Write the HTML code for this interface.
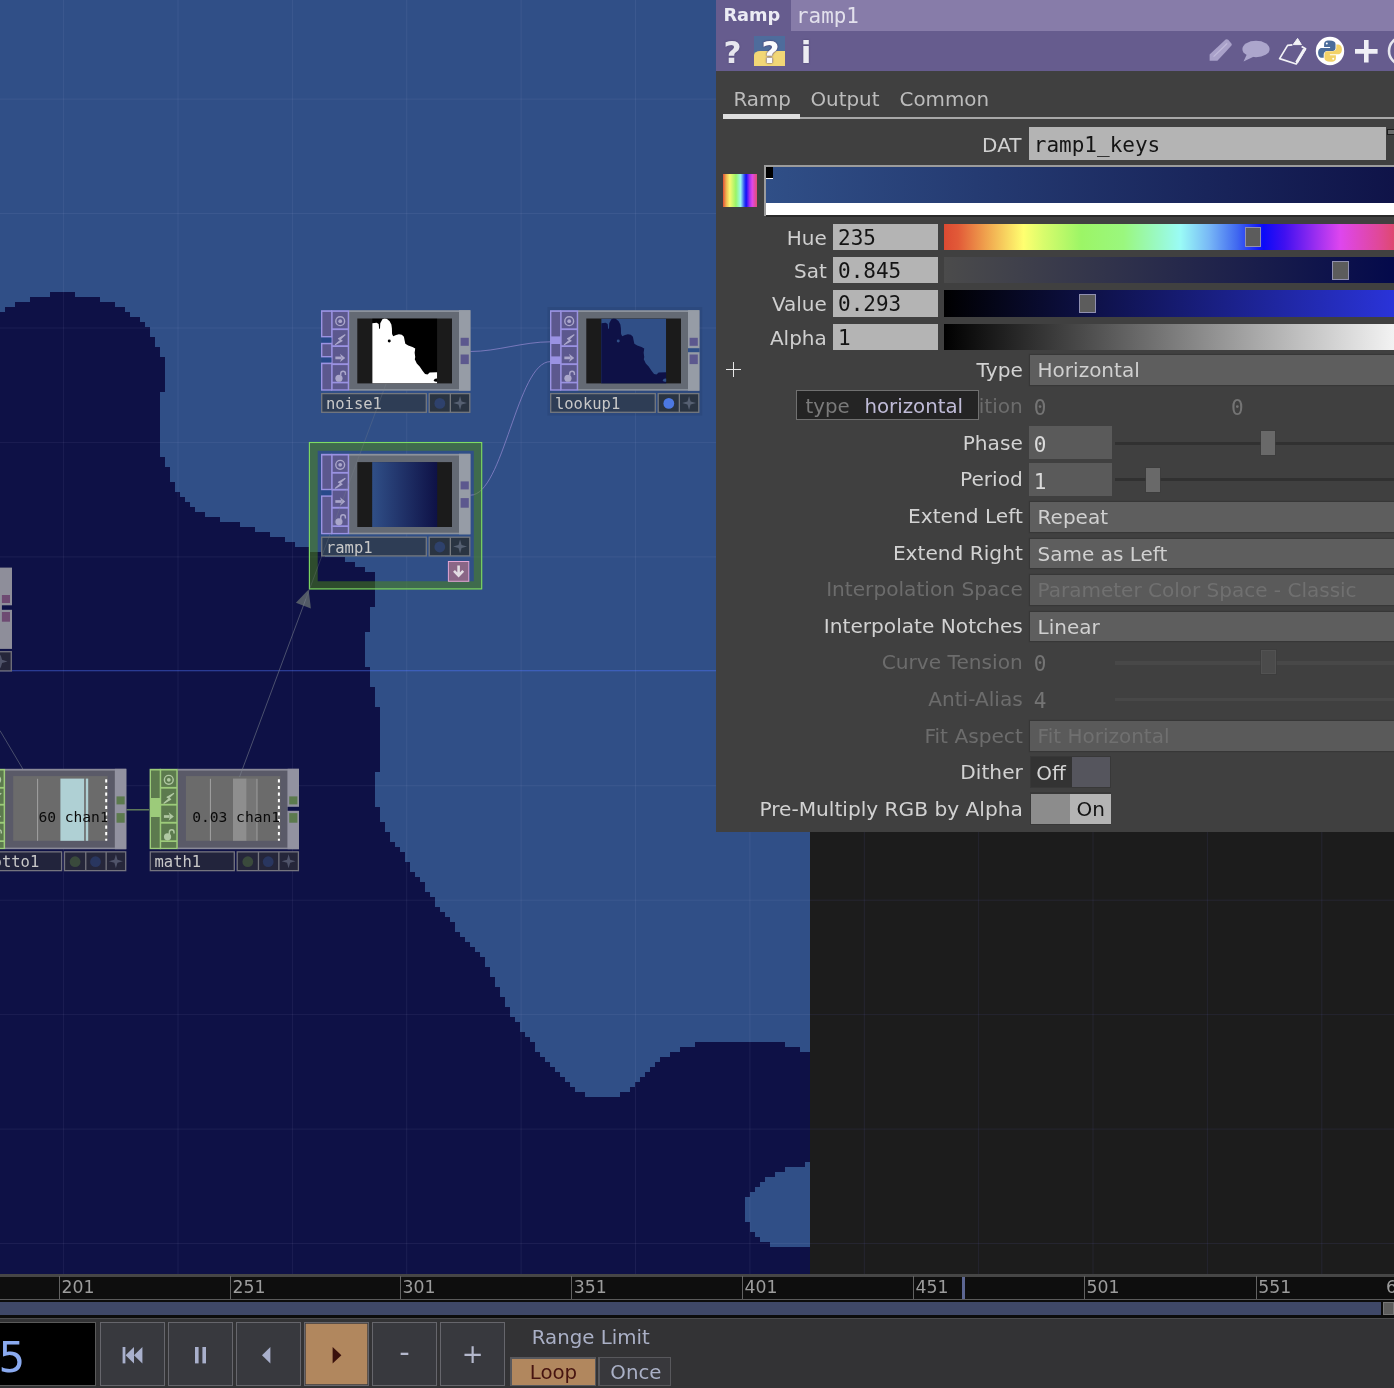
<!DOCTYPE html>
<html><head><meta charset="utf-8"><title>TouchDesigner - ramp1</title>
<style>
html,body{margin:0;padding:0;background:#0e1146;}
body{width:1394px;height:1388px;position:relative;overflow:hidden;font-family:"DejaVu Sans","Liberation Sans",sans-serif;}
.abs{position:absolute;}
#pp,#tl,#net{will-change:transform;}
.mono{font-family:"DejaVu Sans Mono","Liberation Mono",monospace;}

#pp{left:716px;top:0;width:678px;height:831.9px;background:#404040;overflow:hidden;}
#pp .h1{left:0;top:0;width:678px;height:31px;background:#877ca9;}
#pp .h1 .op{left:0;top:0;width:75px;height:31px;background:#665c8e;color:#ececf4;font-weight:bold;font-size:17.8px;line-height:30px;text-indent:7.4px;}
#pp .h1 .nm{left:80px;top:0;height:31px;line-height:32px;color:#e2e0ec;font-size:20.9px;}
#pp .h2{left:0;top:31px;width:678px;height:40px;background:#665c8e;}
.tab{top:86.5px;height:26px;line-height:26px;font-size:19.9px;color:#bcbcbc;}
.lbl{right:371.2px;height:31px;line-height:31px;font-size:20.15px;color:#d2d2d2;white-space:nowrap;text-align:right;}
.lbl.dis{color:#6c6c6c;}
.dd{left:314.2px;width:372px;height:29.7px;background:#5e5e5e;box-shadow:0 0 0 1.1px #373737;color:#d0d0d0;font-size:20px;line-height:31.4px;text-indent:7.4px;white-space:nowrap;}
.dd.dis{color:#707070;background:#5a5a5a;}
.nf{left:313.2px;width:82.7px;height:33.3px;background:#5a5a5a;color:#dadada;font-size:21px;line-height:34.6px;text-indent:4.5px;}
.trk{left:399px;width:290px;height:3.2px;background:#313131;}
.knob{width:14.4px;height:23.6px;background:#696969;box-shadow:0 0 0 0.7px #3c3c3c;}
.hl{right:567.2px;height:26.4px;line-height:29px;font-size:20px;color:#cfcfcf;text-align:right;white-space:nowrap;}
.hf{left:117px;width:104.6px;height:26.4px;background:#b4b4b4;color:#141414;font-size:21px;line-height:29.8px;text-indent:5px;}
.hs{left:228px;width:472.7px;height:26.4px;}
.hk{width:14.6px;height:17.6px;background:#5c5c5c;border:1px solid #9090b0;}

#tl{left:0;top:1274.2px;width:1394px;height:113.8px;background:#333335;}
.tk{top:1.4px;width:1.4px;height:22.6px;background:#626262;}
.tn{top:1.2px;height:22px;line-height:22px;font-size:17.3px;color:#9c9c9c;}
.btn{top:47px;width:63.3px;height:62.6px;background:#38393e;border:1.1px solid #66666c;}

</style></head><body>
<svg id="net" width="1394" height="1275" viewBox="0 0 1394 1275" style="position:absolute;left:0;top:0"><rect width="810" height="1275" fill="#0e1146"/><g fill="#304f87" shape-rendering="crispEdges"><rect x="0.00" y="306.90" width="4.55" height="5.05"/><rect x="0.00" y="301.90" width="14.55" height="5.05"/><rect x="0.00" y="296.90" width="29.55" height="5.05"/><rect x="0.00" y="291.90" width="49.55" height="5.05"/><rect x="0.00" y="0.00" width="810.05" height="291.95"/><rect x="74.50" y="291.90" width="735.55" height="5.05"/><rect x="99.50" y="296.90" width="710.55" height="5.05"/><rect x="114.50" y="301.90" width="695.55" height="5.05"/><rect x="124.50" y="306.90" width="685.55" height="5.05"/><rect x="129.50" y="311.90" width="680.55" height="5.05"/><rect x="139.50" y="316.90" width="670.55" height="5.05"/><rect x="144.50" y="321.90" width="665.55" height="5.05"/><rect x="149.50" y="326.90" width="660.55" height="10.05"/><rect x="154.50" y="336.90" width="655.55" height="10.05"/><rect x="159.50" y="346.90" width="650.55" height="10.05"/><rect x="159.50" y="391.90" width="650.55" height="65.05"/><rect x="164.50" y="356.90" width="645.55" height="35.05"/><rect x="164.50" y="456.90" width="645.55" height="10.05"/><rect x="169.50" y="466.90" width="640.55" height="15.05"/><rect x="174.50" y="481.90" width="635.55" height="10.05"/><rect x="179.50" y="491.90" width="630.55" height="5.05"/><rect x="184.50" y="496.90" width="625.55" height="5.05"/><rect x="189.50" y="501.90" width="620.55" height="5.05"/><rect x="194.50" y="506.90" width="615.55" height="5.05"/><rect x="204.50" y="511.90" width="605.55" height="5.05"/><rect x="219.50" y="516.90" width="590.55" height="5.05"/><rect x="239.50" y="521.90" width="570.55" height="5.05"/><rect x="254.50" y="526.90" width="555.55" height="5.05"/><rect x="269.50" y="531.90" width="540.55" height="5.05"/><rect x="284.50" y="536.90" width="525.55" height="5.05"/><rect x="294.50" y="541.90" width="515.55" height="5.05"/><rect x="309.50" y="546.90" width="500.55" height="5.05"/><rect x="324.50" y="551.90" width="485.55" height="5.05"/><rect x="344.50" y="556.90" width="465.55" height="5.05"/><rect x="354.50" y="561.90" width="455.55" height="5.05"/><rect x="364.50" y="566.90" width="445.55" height="5.05"/><rect x="364.50" y="631.90" width="445.55" height="35.05"/><rect x="369.50" y="606.90" width="440.55" height="25.05"/><rect x="369.50" y="666.90" width="440.55" height="20.05"/><rect x="374.50" y="571.90" width="435.55" height="35.05"/><rect x="374.50" y="686.90" width="435.55" height="20.05"/><rect x="374.50" y="771.90" width="435.55" height="35.05"/><rect x="379.50" y="706.90" width="430.55" height="65.05"/><rect x="379.50" y="806.90" width="430.55" height="15.05"/><rect x="384.50" y="821.90" width="425.55" height="10.05"/><rect x="389.50" y="831.90" width="420.55" height="10.05"/><rect x="394.50" y="841.90" width="415.55" height="5.05"/><rect x="399.50" y="846.90" width="410.55" height="5.05"/><rect x="404.50" y="851.90" width="405.55" height="10.05"/><rect x="409.50" y="861.90" width="400.55" height="10.05"/><rect x="414.50" y="871.90" width="395.55" height="5.05"/><rect x="419.50" y="876.90" width="390.55" height="5.05"/><rect x="424.50" y="881.90" width="385.55" height="10.05"/><rect x="429.50" y="891.90" width="380.55" height="5.05"/><rect x="434.50" y="896.90" width="375.55" height="10.05"/><rect x="439.50" y="906.90" width="370.55" height="5.05"/><rect x="444.50" y="911.90" width="365.55" height="5.05"/><rect x="449.50" y="916.90" width="360.55" height="5.05"/><rect x="454.50" y="921.90" width="355.55" height="10.05"/><rect x="459.50" y="931.90" width="350.55" height="5.05"/><rect x="464.50" y="936.90" width="345.55" height="5.05"/><rect x="469.50" y="941.90" width="340.55" height="5.05"/><rect x="474.50" y="946.90" width="335.55" height="5.05"/><rect x="479.50" y="951.90" width="330.55" height="5.05"/><rect x="484.50" y="956.90" width="325.55" height="10.05"/><rect x="489.50" y="966.90" width="320.55" height="10.05"/><rect x="494.50" y="976.90" width="315.55" height="10.05"/><rect x="499.50" y="986.90" width="310.55" height="10.05"/><rect x="504.50" y="996.90" width="305.55" height="10.05"/><rect x="509.50" y="1006.90" width="300.55" height="10.05"/><rect x="514.50" y="1016.90" width="295.55" height="5.05"/><rect x="519.50" y="1021.90" width="290.55" height="10.05"/><rect x="524.50" y="1031.90" width="285.55" height="5.05"/><rect x="529.50" y="1036.90" width="280.55" height="5.05"/><rect x="534.50" y="1046.90" width="145.05" height="5.05"/><rect x="534.50" y="1041.90" width="160.05" height="5.05"/><rect x="539.50" y="1051.90" width="130.05" height="5.05"/><rect x="544.50" y="1056.90" width="115.05" height="5.05"/><rect x="549.50" y="1061.90" width="105.05" height="5.05"/><rect x="554.50" y="1066.90" width="95.05" height="5.05"/><rect x="559.50" y="1071.90" width="85.05" height="5.05"/><rect x="564.50" y="1076.90" width="75.05" height="5.05"/><rect x="569.50" y="1081.90" width="65.05" height="5.05"/><rect x="574.50" y="1086.90" width="55.05" height="5.05"/><rect x="584.50" y="1091.90" width="35.05" height="5.05"/><rect x="744.50" y="1196.90" width="65.55" height="25.05"/><rect x="749.50" y="1191.90" width="60.55" height="5.05"/><rect x="749.50" y="1221.90" width="60.55" height="10.05"/><rect x="754.50" y="1186.90" width="55.55" height="5.05"/><rect x="754.50" y="1231.90" width="55.55" height="5.05"/><rect x="759.50" y="1181.90" width="50.55" height="5.05"/><rect x="759.50" y="1236.90" width="50.55" height="5.05"/><rect x="764.50" y="1176.90" width="45.55" height="5.05"/><rect x="769.50" y="1241.90" width="40.55" height="5.05"/><rect x="774.50" y="1171.90" width="35.55" height="5.05"/><rect x="784.50" y="1041.90" width="25.55" height="5.05"/><rect x="784.50" y="1166.90" width="25.55" height="5.05"/><rect x="799.50" y="1046.90" width="10.55" height="5.05"/><rect x="804.50" y="1161.90" width="5.55" height="5.05"/></g><rect x="810" y="0" width="584" height="1275" fill="#1c1c1c"/><rect x="63.1" y="0" width="1" height="1275" fill="#d0d8ff" fill-opacity="0.072"/><rect x="177.5" y="0" width="1" height="1275" fill="#d0d8ff" fill-opacity="0.072"/><rect x="291.9" y="0" width="1" height="1275" fill="#d0d8ff" fill-opacity="0.072"/><rect x="406.2" y="0" width="1" height="1275" fill="#d0d8ff" fill-opacity="0.072"/><rect x="520.6" y="0" width="1" height="1275" fill="#d0d8ff" fill-opacity="0.072"/><rect x="635.0" y="0" width="1" height="1275" fill="#d0d8ff" fill-opacity="0.072"/><rect x="749.4" y="0" width="1" height="1275" fill="#d0d8ff" fill-opacity="0.072"/><rect x="863.8" y="0" width="1" height="1275" fill="#8080ff" fill-opacity="0.09"/><rect x="978.1" y="0" width="1" height="1275" fill="#8080ff" fill-opacity="0.09"/><rect x="1092.5" y="0" width="1" height="1275" fill="#8080ff" fill-opacity="0.09"/><rect x="1206.9" y="0" width="1" height="1275" fill="#8080ff" fill-opacity="0.09"/><rect x="1321.3" y="0" width="1" height="1275" fill="#8080ff" fill-opacity="0.09"/><rect x="0" y="98.6" width="810" height="1" fill="#d0d8ff" fill-opacity="0.072"/><rect x="810" y="98.6" width="584" height="1" fill="#8080ff" fill-opacity="0.09"/><rect x="0" y="213.0" width="810" height="1" fill="#d0d8ff" fill-opacity="0.072"/><rect x="810" y="213.0" width="584" height="1" fill="#8080ff" fill-opacity="0.09"/><rect x="0" y="327.5" width="810" height="1" fill="#d0d8ff" fill-opacity="0.072"/><rect x="810" y="327.5" width="584" height="1" fill="#8080ff" fill-opacity="0.09"/><rect x="0" y="441.9" width="810" height="1" fill="#d0d8ff" fill-opacity="0.072"/><rect x="810" y="441.9" width="584" height="1" fill="#8080ff" fill-opacity="0.09"/><rect x="0" y="556.4" width="810" height="1" fill="#d0d8ff" fill-opacity="0.072"/><rect x="810" y="556.4" width="584" height="1" fill="#8080ff" fill-opacity="0.09"/><rect x="0" y="670.0" width="810" height="1.3" fill="#5078ff" fill-opacity="0.42"/><rect x="810" y="670.8" width="584" height="1" fill="#8080ff" fill-opacity="0.09"/><rect x="0" y="785.2" width="810" height="1" fill="#d0d8ff" fill-opacity="0.072"/><rect x="810" y="785.2" width="584" height="1" fill="#8080ff" fill-opacity="0.09"/><rect x="0" y="899.7" width="810" height="1" fill="#d0d8ff" fill-opacity="0.072"/><rect x="810" y="899.7" width="584" height="1" fill="#8080ff" fill-opacity="0.09"/><rect x="0" y="1014.1" width="810" height="1" fill="#d0d8ff" fill-opacity="0.072"/><rect x="810" y="1014.1" width="584" height="1" fill="#8080ff" fill-opacity="0.09"/><rect x="0" y="1128.6" width="810" height="1" fill="#d0d8ff" fill-opacity="0.072"/><rect x="810" y="1128.6" width="584" height="1" fill="#8080ff" fill-opacity="0.09"/><rect x="0" y="1243.0" width="810" height="1" fill="#d0d8ff" fill-opacity="0.072"/><rect x="810" y="1243.0" width="584" height="1" fill="#8080ff" fill-opacity="0.09"/><line x1="0" y1="730.6" x2="27" y2="776" stroke="#7a828c" stroke-opacity="0.6" stroke-width="0.9"/><rect x="547.4" y="307" width="154.8" height="108.6" fill="#101830" fill-opacity="0.09"/><path d="M470.4 351.5 C497 351.5 523 341.8 550.4 341.8" fill="none" stroke="#8f86cc" stroke-width="1" stroke-opacity="0.75"/><path d="M470.4 495.2 C503.4 495.2 517.1 361.6 550.4 361.6" fill="none" stroke="#8f86cc" stroke-width="1" stroke-opacity="0.75"/><line x1="126.5" y1="809.8" x2="149" y2="809.8" stroke="#6e8e5e" stroke-width="1.3"/><path fill-rule="evenodd" d="M308.9 442 H482.2 V589.4 H308.9 Z M317.7 450.7 H473.8 V581.2 H317.7 Z" fill="#4e8714" fill-opacity="0.5"/><rect x="309.4" y="442.5" width="172.3" height="146.4" fill="none" stroke="#7edc64" stroke-width="1.1"/><polygon points="308.6,589.6 295.9,602.7 310.9,608.6" fill="#525a66"/><rect x="448.4" y="561.5" width="20.4" height="19.8" fill="#8a6686" stroke="#e4a6d4" stroke-width="1"/><path d="M458.6 565.5 V575 M454 570.8 L458.6 575.6 L463.2 570.8" fill="none" stroke="#e2dce2" stroke-width="2.6"/><g transform="translate(321.0,310.2)"><rect x="28" y="0" width="121.4" height="80.5" fill="#8c929c"/><rect x="28" y="1.8" width="110" height="77.1" fill="#646a74"/><rect x="138" y="0" width="11.4" height="80.5" fill="#969ca6"/><rect x="10.2" y="0" width="18" height="80.5" fill="#9a92e2"/><rect x="11.6" y="1.7" width="15.1" height="16.4" fill="#5c588e"/><rect x="11.6" y="19.9" width="15.1" height="15.1" fill="#5c588e"/><rect x="11.6" y="36.8" width="15.1" height="16.2" fill="#5c588e"/><rect x="11.6" y="54.9" width="15.1" height="16.6" fill="#5c588e"/><rect x="11.6" y="73.2" width="15.1" height="5.9" fill="#5c588e"/><g transform="translate(12.00,3.80) scale(0.9)"><circle cx="8" cy="8" r="4.9" fill="none" stroke="#aaa6ca" stroke-width="1.55"/><circle cx="8" cy="8" r="2.1" fill="#aaa6ca"/></g><g transform="translate(12.00,22.25) scale(0.9)"><path transform="translate(8,8) scale(0.86) translate(-8,-8)" d="M14.2 1.8 L5.8 6.8 L8.8 8.4 L1.8 14.4 L10.4 9.4 L7.6 7.8 Z" fill="#aaa6ca" stroke="#aaa6ca" stroke-width="1.5" stroke-linejoin="round"/></g><g transform="translate(12.00,40.50) scale(0.9)"><path d="M2.6 8 H9" fill="none" stroke="#aaa6ca" stroke-width="3"/><path d="M7.8 3.4 L13.6 8 L7.8 12.6 L9.4 8 Z" fill="#aaa6ca"/></g><g transform="translate(12.00,58.50) scale(0.9)"><circle cx="6.6" cy="10.6" r="4" fill="#aaa6ca"/><path d="M8.6 7.6 V5.4 a2.6 2.6 0 0 1 5.2 0 V7" fill="none" stroke="#aaa6ca" stroke-width="1.6"/></g><rect x="0.6" y="27.2" width="9.8" height="5.4" fill="#28498a"/><rect x="0.6" y="47.2" width="9.8" height="5.2" fill="#28498a"/><rect x="0" y="0.0" width="11.2" height="27.2" fill="#9a92e2"/><rect x="0" y="32.6" width="11.2" height="14.6" fill="#9a92e2"/><rect x="0" y="52.4" width="11.2" height="28.1" fill="#9a92e2"/><rect x="1.4" y="1.7" width="8.7" height="24.1" fill="#5c588e"/><rect x="1.4" y="34.1" width="8.7" height="11.7" fill="#5c588e"/><rect x="1.4" y="54.0" width="8.7" height="25.1" fill="#5c588e"/><rect x="36.3" y="8.3" width="94.7" height="64.9" fill="#1b1b1b"/><svg x="51.2" y="8.3" width="65" height="64.9" viewBox="0 0 100 100" preserveAspectRatio="none"><rect width="100" height="100" fill="#000000"/><polygon points="0.0,100.0 0.0,7.2 6.9,6.7 10.0,8.6 10.7,15.7 12.0,15.7 12.4,7.4 15.7,1.2 19.1,-0.3 22.4,0.3 26.8,4.4 29.5,9.4 30.3,15.0 30.6,23.9 32.3,27.2 36.7,25.6 41.1,24.4 45.5,25.0 48.8,28.3 49.9,33.9 51.0,38.9 55.4,41.7 62.0,43.9 66.2,46.1 65.3,52.8 66.2,59.4 65.5,62.8 68.6,69.4 73.0,73.9 77.4,80.6 81.3,85.6 85.1,86.1 88.4,83.3 100.0,82.8 100.0,100.0" fill="#ffffff"/><circle cx="26.2" cy="34.7" r="2.3" fill="#000000"/><ellipse cx="98.6" cy="95.0" rx="3.6" ry="2.6" fill="#000000"/></svg><rect x="139.6" y="27.6" width="8.2" height="8" fill="#5c588e"/><rect x="139.6" y="44.3" width="8.2" height="9.6" fill="#5c588e"/><rect x="0.7" y="83.40" width="104.6" height="18.7" fill="#2e3d55" stroke="#74787e" stroke-width="1.3"/><text x="4.9" y="98.8" font-family="DejaVu Sans Mono, Liberation Mono, monospace" font-size="15.5" fill="#c8c8c8">noise1</text><rect x="108.2" y="83.40" width="40.6" height="18.7" fill="#2a3442" stroke="#74787e" stroke-width="1.3"/><circle cx="118.8" cy="93.2" r="5.4" fill="#2e416c"/><rect x="128.7" y="83.40" width="1.3" height="18.7" fill="#74787e"/><path d="M139.05 85.75 L140.59 91.21 L146.05 92.75 L140.59 94.29 L139.05 99.75 L137.51 94.29 L132.05 92.75 L137.51 91.21 Z" fill="#566072"/></g><g transform="translate(550.0,310.2)"><rect x="28" y="0" width="121.4" height="80.5" fill="#8c929c"/><rect x="28" y="1.8" width="110" height="77.1" fill="#646a74"/><rect x="138" y="0" width="11.4" height="80.5" fill="#969ca6"/><rect x="10.2" y="0" width="18" height="80.5" fill="#9a92e2"/><rect x="11.6" y="1.7" width="15.1" height="16.4" fill="#5c588e"/><rect x="11.6" y="19.9" width="15.1" height="15.1" fill="#5c588e"/><rect x="11.6" y="36.8" width="15.1" height="16.2" fill="#5c588e"/><rect x="11.6" y="54.9" width="15.1" height="16.6" fill="#5c588e"/><rect x="11.6" y="73.2" width="15.1" height="5.9" fill="#5c588e"/><g transform="translate(12.00,3.80) scale(0.9)"><circle cx="8" cy="8" r="4.9" fill="none" stroke="#aaa6ca" stroke-width="1.55"/><circle cx="8" cy="8" r="2.1" fill="#aaa6ca"/></g><g transform="translate(12.00,22.25) scale(0.9)"><path transform="translate(8,8) scale(0.86) translate(-8,-8)" d="M14.2 1.8 L5.8 6.8 L8.8 8.4 L1.8 14.4 L10.4 9.4 L7.6 7.8 Z" fill="#aaa6ca" stroke="#aaa6ca" stroke-width="1.5" stroke-linejoin="round"/></g><g transform="translate(12.00,40.50) scale(0.9)"><path d="M2.6 8 H9" fill="none" stroke="#aaa6ca" stroke-width="3"/><path d="M7.8 3.4 L13.6 8 L7.8 12.6 L9.4 8 Z" fill="#aaa6ca"/></g><g transform="translate(12.00,58.50) scale(0.9)"><circle cx="6.6" cy="10.6" r="4" fill="#aaa6ca"/><path d="M8.6 7.6 V5.4 a2.6 2.6 0 0 1 5.2 0 V7" fill="none" stroke="#aaa6ca" stroke-width="1.6"/></g><rect x="0" y="0.0" width="11.2" height="80.5" fill="#9a92e2"/><rect x="1.4" y="1.7" width="8.7" height="24.5" fill="#5c588e"/><rect x="1.4" y="33.8" width="8.7" height="12.4" fill="#5c588e"/><rect x="1.4" y="53.8" width="8.7" height="25.3" fill="#5c588e"/><rect x="36.3" y="8.3" width="94.7" height="64.9" fill="#1b1b1b"/><svg x="51.2" y="8.3" width="65" height="64.9" viewBox="0 0 100 100" preserveAspectRatio="none"><rect width="100" height="100" fill="#304f87"/><polygon points="0.0,100.0 0.0,7.2 6.9,6.7 10.0,8.6 10.7,15.7 12.0,15.7 12.4,7.4 15.7,1.2 19.1,-0.3 22.4,0.3 26.8,4.4 29.5,9.4 30.3,15.0 30.6,23.9 32.3,27.2 36.7,25.6 41.1,24.4 45.5,25.0 48.8,28.3 49.9,33.9 51.0,38.9 55.4,41.7 62.0,43.9 66.2,46.1 65.3,52.8 66.2,59.4 65.5,62.8 68.6,69.4 73.0,73.9 77.4,80.6 81.3,85.6 85.1,86.1 88.4,83.3 100.0,82.8 100.0,100.0" fill="#0e1146"/><circle cx="26.2" cy="34.7" r="2.3" fill="#304f87"/><ellipse cx="98.6" cy="95.0" rx="3.6" ry="2.6" fill="#304f87"/></svg><rect x="139.6" y="27.6" width="8.2" height="8" fill="#5c588e"/><rect x="139.6" y="44.3" width="8.2" height="9.6" fill="#5c588e"/><rect x="138" y="38" width="11.6" height="4" fill="#304f87"/><rect x="0.7" y="83.40" width="104.6" height="18.7" fill="#2e3d55" stroke="#74787e" stroke-width="1.3"/><text x="4.9" y="98.8" font-family="DejaVu Sans Mono, Liberation Mono, monospace" font-size="15.5" fill="#c8c8c8">lookup1</text><rect x="108.2" y="83.40" width="40.6" height="18.7" fill="#2a3442" stroke="#74787e" stroke-width="1.3"/><circle cx="118.8" cy="93.2" r="5.4" fill="#4c78e2"/><rect x="128.7" y="83.40" width="1.3" height="18.7" fill="#74787e"/><path d="M139.05 85.75 L140.59 91.21 L146.05 92.75 L140.59 94.29 L139.05 99.75 L137.51 94.29 L132.05 92.75 L137.51 91.21 Z" fill="#566072"/></g><g transform="translate(321.0,453.8)"><rect x="28" y="0" width="121.4" height="80.5" fill="#8c929c"/><rect x="28" y="1.8" width="110" height="77.1" fill="#646a74"/><rect x="138" y="0" width="11.4" height="80.5" fill="#969ca6"/><rect x="10.2" y="0" width="18" height="80.5" fill="#9a92e2"/><rect x="11.6" y="1.7" width="15.1" height="16.4" fill="#5c588e"/><rect x="11.6" y="19.9" width="15.1" height="15.1" fill="#5c588e"/><rect x="11.6" y="36.8" width="15.1" height="16.2" fill="#5c588e"/><rect x="11.6" y="54.9" width="15.1" height="16.6" fill="#5c588e"/><rect x="11.6" y="73.2" width="15.1" height="5.9" fill="#5c588e"/><g transform="translate(12.00,3.80) scale(0.9)"><circle cx="8" cy="8" r="4.9" fill="none" stroke="#aaa6ca" stroke-width="1.55"/><circle cx="8" cy="8" r="2.1" fill="#aaa6ca"/></g><g transform="translate(12.00,22.25) scale(0.9)"><path transform="translate(8,8) scale(0.86) translate(-8,-8)" d="M14.2 1.8 L5.8 6.8 L8.8 8.4 L1.8 14.4 L10.4 9.4 L7.6 7.8 Z" fill="#aaa6ca" stroke="#aaa6ca" stroke-width="1.5" stroke-linejoin="round"/></g><g transform="translate(12.00,40.50) scale(0.9)"><path d="M2.6 8 H9" fill="none" stroke="#aaa6ca" stroke-width="3"/><path d="M7.8 3.4 L13.6 8 L7.8 12.6 L9.4 8 Z" fill="#aaa6ca"/></g><g transform="translate(12.00,58.50) scale(0.9)"><circle cx="6.6" cy="10.6" r="4" fill="#aaa6ca"/><path d="M8.6 7.6 V5.4 a2.6 2.6 0 0 1 5.2 0 V7" fill="none" stroke="#aaa6ca" stroke-width="1.6"/></g><rect x="0.6" y="36.4" width="9.8" height="5.2" fill="#28498a"/><rect x="0" y="0.0" width="11.2" height="36.4" fill="#9a92e2"/><rect x="0" y="41.6" width="11.2" height="38.9" fill="#9a92e2"/><rect x="1.4" y="1.7" width="8.7" height="33.3" fill="#5c588e"/><rect x="1.4" y="43.0" width="8.7" height="36.1" fill="#5c588e"/><defs><linearGradient id="rg" x1="0" x2="1" y1="0" y2="0"><stop offset="0" stop-color="#304f87"/><stop offset="1" stop-color="#0e1146"/></linearGradient></defs><rect x="36.3" y="8.3" width="94.7" height="64.9" fill="#1b1b1b"/><rect x="51.2" y="8.3" width="65" height="64.9" fill="url(#rg)"/><rect x="139.6" y="27.6" width="8.2" height="8" fill="#5c588e"/><rect x="139.6" y="44.3" width="8.2" height="9.6" fill="#5c588e"/><rect x="0.7" y="83.40" width="104.6" height="18.7" fill="#2e3d55" stroke="#74787e" stroke-width="1.3"/><text x="4.9" y="98.8" font-family="DejaVu Sans Mono, Liberation Mono, monospace" font-size="15.5" fill="#c8c8c8">ramp1</text><rect x="108.2" y="83.40" width="40.6" height="18.7" fill="#2a3442" stroke="#74787e" stroke-width="1.3"/><circle cx="118.8" cy="93.2" r="5.4" fill="#2e416c"/><rect x="128.7" y="83.40" width="1.3" height="18.7" fill="#74787e"/><path d="M139.05 85.75 L140.59 91.21 L146.05 92.75 L140.59 94.29 L139.05 99.75 L137.51 94.29 L132.05 92.75 L137.51 91.21 Z" fill="#566072"/></g><g transform="translate(-23.1,768.8)"><rect x="28" y="0" width="121.4" height="80.4" fill="#8a8a98"/><rect x="28" y="1.8" width="110" height="77.0" fill="#5a5a68"/><rect x="138" y="0" width="11.4" height="80.4" fill="#9292a0"/><rect x="10.2" y="0" width="18" height="80.4" fill="#9ccb7a"/><rect x="11.6" y="1.7" width="15.1" height="16.4" fill="#5c7a4e"/><rect x="11.6" y="19.9" width="15.1" height="15.1" fill="#5c7a4e"/><rect x="11.6" y="36.8" width="15.1" height="16.2" fill="#5c7a4e"/><rect x="11.6" y="54.9" width="15.1" height="16.6" fill="#5c7a4e"/><rect x="11.6" y="73.2" width="15.1" height="5.8" fill="#5c7a4e"/><g transform="translate(12.00,3.80) scale(0.9)"><circle cx="8" cy="8" r="4.9" fill="none" stroke="#b0c8a2" stroke-width="1.55"/><circle cx="8" cy="8" r="2.1" fill="#b0c8a2"/></g><g transform="translate(12.00,22.25) scale(0.9)"><path transform="translate(8,8) scale(0.86) translate(-8,-8)" d="M14.2 1.8 L5.8 6.8 L8.8 8.4 L1.8 14.4 L10.4 9.4 L7.6 7.8 Z" fill="#b0c8a2" stroke="#b0c8a2" stroke-width="1.5" stroke-linejoin="round"/></g><g transform="translate(12.00,40.50) scale(0.9)"><path d="M2.6 8 H9" fill="none" stroke="#b0c8a2" stroke-width="3"/><path d="M7.8 3.4 L13.6 8 L7.8 12.6 L9.4 8 Z" fill="#b0c8a2"/></g><g transform="translate(12.00,58.50) scale(0.9)"><circle cx="6.6" cy="10.6" r="4" fill="#b0c8a2"/><path d="M8.6 7.6 V5.4 a2.6 2.6 0 0 1 5.2 0 V7" fill="none" stroke="#b0c8a2" stroke-width="1.6"/></g><rect x="0" y="0.0" width="11.2" height="80.4" fill="#9ccb7a"/><rect x="1.4" y="1.7" width="8.7" height="77.3" fill="#5c7a4e"/><rect x="36.3" y="7.3" width="94.4" height="64.7" fill="#6b6b6b"/><rect x="83.5" y="9.8" width="24.0" height="62.2" fill="#afd0d4"/><rect x="107.5" y="9.8" width="1.4" height="62.2" fill="#6b6b6b"/><rect x="108.9" y="9.8" width="2.4" height="62.2" fill="#afd0d4"/><rect x="60.1" y="10" width="1.1" height="62" fill="#9c9c9c"/><line x1="129.3" y1="10.5" x2="129.3" y2="72" stroke="#fff" stroke-width="2" stroke-dasharray="3.2 3.4"/><clipPath id="cp615"><rect x="36.3" y="7.3" width="94.2" height="64.7"/></clipPath><text clip-path="url(#cp615)" x="61.5" y="53.7" font-family="DejaVu Sans Mono, Liberation Mono, monospace" font-size="14.6" fill="#0a0a0a">60 chan1</text><rect x="139.6" y="27.6" width="8.2" height="8" fill="#5c7a4e"/><rect x="139.6" y="44.3" width="8.2" height="9.6" fill="#5c7a4e"/><rect x="0.7" y="83.05" width="84.0" height="18.8" fill="#22243c" stroke="#74747e" stroke-width="1.3"/><text x="15.7" y="98.2" font-family="DejaVu Sans Mono, Liberation Mono, monospace" font-size="15.5" fill="#c8c8c8">otto1</text><rect x="87.6" y="83.05" width="61.2" height="18.8" fill="#25263a" stroke="#74747e" stroke-width="1.3"/><circle cx="98.2" cy="92.9" r="5.4" fill="#3a4a3c"/><rect x="108.2" y="83.05" width="1.3" height="18.8" fill="#74747e"/><circle cx="118.6" cy="92.9" r="5.4" fill="#29365f"/><rect x="128.6" y="83.05" width="1.3" height="18.8" fill="#74747e"/><path d="M139.00 85.45 L140.54 90.91 L146.00 92.45 L140.54 93.99 L139.00 99.45 L137.46 93.99 L132.00 92.45 L137.46 90.91 Z" fill="#50546a"/></g><g transform="translate(149.6,768.8)"><rect x="28" y="0" width="121.4" height="80.4" fill="#8a8a98"/><rect x="28" y="1.8" width="110" height="77.0" fill="#5a5a68"/><rect x="138" y="0" width="11.4" height="80.4" fill="#9292a0"/><rect x="10.2" y="0" width="18" height="80.4" fill="#9ccb7a"/><rect x="11.6" y="1.7" width="15.1" height="16.4" fill="#5c7a4e"/><rect x="11.6" y="19.9" width="15.1" height="15.1" fill="#5c7a4e"/><rect x="11.6" y="36.8" width="15.1" height="16.2" fill="#5c7a4e"/><rect x="11.6" y="54.9" width="15.1" height="16.6" fill="#5c7a4e"/><rect x="11.6" y="73.2" width="15.1" height="5.8" fill="#5c7a4e"/><g transform="translate(12.00,3.80) scale(0.9)"><circle cx="8" cy="8" r="4.9" fill="none" stroke="#b0c8a2" stroke-width="1.55"/><circle cx="8" cy="8" r="2.1" fill="#b0c8a2"/></g><g transform="translate(12.00,22.25) scale(0.9)"><path transform="translate(8,8) scale(0.86) translate(-8,-8)" d="M14.2 1.8 L5.8 6.8 L8.8 8.4 L1.8 14.4 L10.4 9.4 L7.6 7.8 Z" fill="#b0c8a2" stroke="#b0c8a2" stroke-width="1.5" stroke-linejoin="round"/></g><g transform="translate(12.00,40.50) scale(0.9)"><path d="M2.6 8 H9" fill="none" stroke="#b0c8a2" stroke-width="3"/><path d="M7.8 3.4 L13.6 8 L7.8 12.6 L9.4 8 Z" fill="#b0c8a2"/></g><g transform="translate(12.00,58.50) scale(0.9)"><circle cx="6.6" cy="10.6" r="4" fill="#b0c8a2"/><path d="M8.6 7.6 V5.4 a2.6 2.6 0 0 1 5.2 0 V7" fill="none" stroke="#b0c8a2" stroke-width="1.6"/></g><rect x="0" y="0.0" width="11.2" height="80.4" fill="#9ccb7a"/><rect x="1.4" y="1.7" width="8.7" height="27.5" fill="#5c7a4e"/><rect x="1.4" y="48.2" width="8.7" height="30.8" fill="#5c7a4e"/><rect x="36.3" y="7.3" width="94.4" height="64.7" fill="#6b6b6b"/><rect x="83.4" y="9.8" width="13.7" height="62.2" fill="#8e8e8e"/><rect x="97.1" y="9.8" width="9.7" height="62.2" fill="#767676"/><rect x="60.3" y="10" width="1.1" height="62" fill="#9c9c9c"/><rect x="106.8" y="10" width="1.1" height="62" fill="#9c9c9c"/><line x1="129.3" y1="10.5" x2="129.3" y2="72" stroke="#fff" stroke-width="2" stroke-dasharray="3.2 3.4"/><clipPath id="cp426"><rect x="36.3" y="7.3" width="94.2" height="64.7"/></clipPath><text clip-path="url(#cp426)" x="42.6" y="53.7" font-family="DejaVu Sans Mono, Liberation Mono, monospace" font-size="14.6" fill="#0a0a0a">0.03 chan1</text><rect x="139.6" y="27.6" width="8.2" height="8" fill="#5c7a4e"/><rect x="139.6" y="44.3" width="8.2" height="9.6" fill="#5c7a4e"/><rect x="138" y="38" width="11.6" height="4" fill="#0e1146"/><rect x="0.7" y="83.05" width="84.0" height="18.8" fill="#22243c" stroke="#74747e" stroke-width="1.3"/><text x="4.9" y="98.2" font-family="DejaVu Sans Mono, Liberation Mono, monospace" font-size="15.5" fill="#c8c8c8">math1</text><rect x="87.6" y="83.05" width="61.2" height="18.8" fill="#25263a" stroke="#74747e" stroke-width="1.3"/><circle cx="98.2" cy="92.9" r="5.4" fill="#3a4a3c"/><rect x="108.2" y="83.05" width="1.3" height="18.8" fill="#74747e"/><circle cx="118.6" cy="92.9" r="5.4" fill="#29365f"/><rect x="128.6" y="83.05" width="1.3" height="18.8" fill="#74747e"/><path d="M139.00 85.45 L140.54 90.91 L146.00 92.45 L140.54 93.99 L139.00 99.45 L137.46 93.99 L132.00 92.45 L137.46 90.91 Z" fill="#50546a"/></g><rect x="0" y="567.6" width="12" height="81.3" fill="#8e8e9a"/><rect x="1.9" y="605.3" width="10.2" height="4.5" fill="#0e1146"/><rect x="1.9" y="595" width="8.1" height="8" fill="#6e4a72"/><rect x="1.9" y="612" width="8.1" height="9.7" fill="#6e4a72"/><rect x="-2" y="651.7" width="13.3" height="19.2" fill="#25263a" stroke="#6c6c78" stroke-width="1.4"/><path d="M0.50 654.40 L2.04 659.86 L7.50 661.40 L2.04 662.94 L0.50 668.40 L-1.04 662.94 L-6.50 661.40 L-1.04 659.86 Z" fill="#50546a"/><line x1="386.1" y1="383.7" x2="306" y2="598.6" stroke="#7c848e" stroke-opacity="0.34" stroke-width="0.8"/><line x1="306" y1="598.6" x2="239.5" y2="777" stroke="#7c848e" stroke-opacity="0.62" stroke-width="0.9"/></svg><div id="pp" class="abs"><div class="abs h1"><div class="abs op">Ramp</div><div class="abs nm mono">ramp1</div></div><div class="abs h2"><div class="abs" style="left:7.4px;top:3px;width:22px;height:36px;line-height:36px;font-size:31px;text-shadow:0 0 2px #4a4270;font-weight:bold;color:#e6e6ee;">?</div><div class="abs" style="left:38.4px;top:4.5px;width:30.4px;height:30.6px;background:#4e6c9c;"></div><div class="abs" style="left:38.4px;top:20px;width:30.4px;height:15.1px;background:#f2d776;border-top-left-radius:6px 4px;"></div><div class="abs" style="left:38.6px;top:3px;width:32px;height:36px;line-height:36px;text-align:center;font-size:31px;font-weight:bold;color:#fafafc;text-shadow:0 0 2px #4a3a70,0 0 1px #4a3a70;">?</div><div class="abs" style="left:83px;top:3px;width:14px;height:36px;line-height:36px;text-align:center;font-size:31px;text-shadow:0 0 2px #4a4270;font-weight:bold;color:#ececf2;">i</div><svg class="abs" style="left:480px;top:0" width="198" height="40" viewBox="1196 31 198 40"><g fill="#a9a1c9"><path d="M1209.6 54.6 L1225.6 39.6 Q1227 38.6 1228.2 39.8 L1231.4 43.4 Q1232.2 44.6 1231.2 45.8 L1217.4 60.8 L1209.6 60.8 Z"/></g><path d="M1213.6 56.6 L1227.2 43.4" stroke="#c0b9da" stroke-width="1.3"/><ellipse cx="1256" cy="49" rx="13.6" ry="8.2" fill="#aca6cc"/><path d="M1247 54 L1243.5 61.5 L1254 56.5 Z" fill="#aca6cc"/><g fill="none" stroke="#f2f2f6" stroke-width="1.7" stroke-linejoin="round"><path d="M1292.4 44.8 L1287.6 45.4 L1279.6 58.6 L1296.2 64 L1305.6 48.8 L1301.6 46.4"/><path d="M1293.2 44.6 L1297.6 38.4 L1301.4 44.6 Z" fill="#f2f2f6" stroke-width="1"/></g><path d="M1304.4 49.2 L1296.6 62.6" stroke="#f2f2f6" stroke-width="3"/><circle cx="1330" cy="51" r="14.2" fill="#ffffff"/><path d="M1329.5 40.5 c-5 0 -5.4 2.2 -5.4 3.8 v2.7 h6 v1 h-8.4 c-2.6 0 -3.6 2.6 -3.6 5 c0 2.6 1.2 4.8 3.4 4.8 h2.2 v-3.2 c0 -2 1.6 -3.6 3.6 -3.6 h5.4 c1.6 0 2.8 -1.2 2.8 -2.8 v-4.2 c0 -2 -2 -3.5 -6 -3.5 z" fill="#4a6c9a"/><path d="M1330.5 61.8 c5 0 5.4 -2.2 5.4 -3.8 v-2.7 h-6 v-1 h8.4 c2.6 0 3.6 -2.6 3.6 -5 c0 -2.6 -1.2 -4.8 -3.4 -4.8 h-2.2 v3.2 c0 2 -1.6 3.6 -3.6 3.6 h-5.4 c-1.6 0 -2.8 1.2 -2.8 2.8 v4.2 c0 2 2 3.5 6 3.5 z" fill="#f2d268"/><circle cx="1326.8" cy="43.6" r="1" fill="#fff"/><circle cx="1333.2" cy="58.8" r="1" fill="#fff"/><path d="M1355 51.4 H1377.6 M1366.3 40 V62.6" stroke="#f0f0f6" stroke-width="4.6"/><circle cx="1403" cy="51" r="14" fill="none" stroke="#e6e6ee" stroke-width="2.6"/></svg></div><div class="abs tab" style="left:17.4px;">Ramp</div><div class="abs tab" style="left:94.4px;">Output</div><div class="abs tab" style="left:183.5px;">Common</div><div class="abs" style="left:7px;top:117px;width:680px;height:2px;background:#a8a8a8;"></div><div class="abs" style="left:7px;top:114.4px;width:77px;height:4.8px;background:#dedede;"></div><div class="abs" style="right:372.5px;top:127px;height:33px;line-height:36.4px;font-size:20px;color:#d0d0d0;">DAT</div><div class="abs mono" style="left:313.4px;top:127px;width:356.6px;height:33px;background:#b4b4b4;color:#151515;font-size:21px;line-height:37px;text-indent:4.4px;">ramp1_keys</div><div class="abs" style="left:671px;top:129.4px;width:10px;height:3.2px;background:#6c6c6c;border:1px solid #1c1c1c;"></div><div class="abs" style="left:7px;top:173.5px;width:33.6px;height:33.6px;background:linear-gradient(90deg,#e05038 0%,#f0b850 10%,#f8f870 20%,#98f468 38%,#98f8f0 52%,#3858f0 62%,#1010f8 68%,#a030f0 78%,#e048e8 86%,#e05070 100%);"></div><div class="abs" style="left:48.4px;top:165.4px;width:640px;height:50.4px;background:#9c9c9c;"></div><div class="abs" style="left:49.6px;top:166.6px;width:651px;height:36px;background:linear-gradient(90deg,#304f87,#0e1146);"></div><div class="abs" style="left:49.6px;top:202.6px;width:651px;height:13px;background:#ffffff;"></div><div class="abs" style="left:49.6px;top:215.4px;width:651px;height:1.4px;background:#2a2a2a;"></div><div class="abs" style="left:49.6px;top:166.6px;width:7.6px;height:12.4px;background:#fff;"></div><div class="abs" style="left:50.2px;top:167px;width:6.4px;height:11px;background:#000;"></div><div class="abs hl" style="top:223.8px;">Hue</div><div class="abs hf mono" style="top:223.8px;">235</div><div class="abs hs" style="top:223.8px;background:linear-gradient(90deg,#dc4a32 0%,#e25a38 3%,#f0a44e 9%,#ffff70 16.8%,#d8fc6c 21%,#9cf566 29%,#9af77e 38%,#9af9c8 45.5%,#9afbf6 50%,#78b8f6 56%,#4068f0 62%,#0a0af8 67.5%,#4010f0 72%,#a030f0 79%,#de46ee 83.8%,#e04898 92%,#dc4a32 100%);"></div><div class="abs hk" style="left:528.5px;top:227.4px;"></div><div class="abs hl" style="top:257.0px;">Sat</div><div class="abs hf mono" style="top:257.0px;">0.845</div><div class="abs hs" style="top:257.0px;background:linear-gradient(90deg,#4b4b4b,#00064b);"></div><div class="abs hk" style="left:616.4px;top:260.6px;"></div><div class="abs hl" style="top:290.3px;">Value</div><div class="abs hf mono" style="top:290.3px;">0.293</div><div class="abs hs" style="top:290.3px;background:linear-gradient(90deg,#000000,#2c36e4);"></div><div class="abs hk" style="left:363.0px;top:293.9px;"></div><div class="abs hl" style="top:323.5px;">Alpha</div><div class="abs hf mono" style="top:323.5px;">1</div><div class="abs hs" style="top:323.5px;background:linear-gradient(90deg,#000000,#ffffff);"></div><div class="abs" style="left:10.4px;top:369px;width:15px;height:1.2px;background:#e8e8e8;"></div><div class="abs" style="left:17.3px;top:362px;width:1.2px;height:15px;background:#e8e8e8;"></div><div class="abs lbl" style="top:354.5px;">Type</div><div class="abs dd" style="top:355.0px;">Horizontal</div><div class="abs lbl dis" style="top:391.0px;">Position</div><div class="abs mono" style="left:317.8px;top:391px;height:33px;line-height:34.6px;font-size:21px;color:#747474;">0</div><div class="abs mono" style="left:515px;top:391px;height:33px;line-height:34.6px;font-size:21px;color:#747474;">0</div><div class="abs lbl" style="top:427.5px;">Phase</div><div class="abs nf mono" style="top:426.2px;line-height:38px;">0</div><div class="abs trk" style="top:441.6px;"></div><div class="abs knob" style="left:545px;top:431.4px;"></div><div class="abs lbl" style="top:464.1px;">Period</div><div class="abs nf mono" style="top:462.8px;line-height:38px;">1</div><div class="abs trk" style="top:478.2px;"></div><div class="abs knob" style="left:430px;top:468px;"></div><div class="abs lbl" style="top:500.9px;">Extend Left</div><div class="abs dd" style="top:502.0px;">Repeat</div><div class="abs lbl" style="top:537.5px;">Extend Right</div><div class="abs dd" style="top:538.8px;">Same as Left</div><div class="abs lbl dis" style="top:574.1px;">Interpolation Space</div><div class="abs dd dis" style="top:575.2px;">Parameter Color Space - Classic</div><div class="abs lbl" style="top:610.7px;">Interpolate Notches</div><div class="abs dd" style="top:611.8px;">Linear</div><div class="abs lbl dis" style="top:647.3px;">Curve Tension</div><div class="abs mono" style="left:317.8px;top:647px;height:33px;line-height:34.6px;font-size:21px;color:#747474;">0</div><div class="abs trk" style="top:661.4px;background:#484848;"></div><div class="abs knob" style="left:544.6px;top:650.4px;background:#4b4b4b;border:1px solid #525252;width:13.4px;height:22px;"></div><div class="abs lbl dis" style="top:683.9px;">Anti-Alias</div><div class="abs mono" style="left:317.8px;top:683.6px;height:33px;line-height:34.6px;font-size:21px;color:#747474;">4</div><div class="abs trk" style="top:698px;background:#484848;"></div><div class="abs lbl dis" style="top:720.5px;">Fit Aspect</div><div class="abs dd dis" style="top:721.4px;">Fit Horizontal</div><div class="abs lbl" style="top:756.9px;">Dither</div><div class="abs" style="left:313.6px;top:755.5px;width:81.8px;height:32.7px;background:#383838;"></div><div class="abs" style="left:315.1px;top:757px;width:40.9px;height:30px;background:#333333;color:#d4d4d4;font-size:20px;line-height:32px;text-indent:5.2px;">Off</div><div class="abs" style="left:356px;top:757px;width:38.4px;height:30px;background:#55555d;"></div><div class="abs lbl" style="top:793.5px;">Pre-Multiply RGB by Alpha</div><div class="abs" style="left:313.6px;top:792.4px;width:81.8px;height:32.7px;background:#383838;"></div><div class="abs" style="left:315.1px;top:793.9px;width:38.9px;height:29.7px;background:#8c8c8c;"></div><div class="abs" style="left:354px;top:793.9px;width:40.9px;height:29.7px;background:#b4b4b4;color:#141414;font-size:20px;line-height:31.6px;text-indent:6.6px;">On</div><div class="abs" style="left:80px;top:390px;width:180.6px;height:28.4px;background:#242424;border:1px solid #707070;font-size:19.8px;line-height:31px;white-space:nowrap;"><span style="color:#7a7a7a;margin-left:8.6px;">type</span><span style="color:#c0bcd8;margin-left:14.6px;">horizontal</span></div></div><div id="tl" class="abs"><div class="abs" style="left:0;top:0;width:1394px;height:2.8px;background:#464646;"></div><div class="abs" style="left:0;top:2.8px;width:1394px;height:22px;background:#0e0e0e;"></div><div class="abs" style="left:0;top:0.8px;width:1394px;height:113px;"><div class="abs" style="left:0;top:24px;width:1394px;height:1.4px;background:#5a5a5a;"></div><div class="abs" style="left:0;top:25.2px;width:1394px;height:17.7px;background:#0c0c0c;"></div><div class="abs tk" style="left:58.8px;"></div><div class="abs tn" style="left:61.6px;">201</div><div class="abs tk" style="left:229.8px;"></div><div class="abs tn" style="left:232.6px;">251</div><div class="abs tk" style="left:399.8px;"></div><div class="abs tn" style="left:402.6px;">301</div><div class="abs tk" style="left:571.0px;"></div><div class="abs tn" style="left:573.8px;">351</div><div class="abs tk" style="left:741.8px;"></div><div class="abs tn" style="left:744.6px;">401</div><div class="abs tk" style="left:912.6px;"></div><div class="abs tn" style="left:915.4px;">451</div><div class="abs tk" style="left:1083.8px;"></div><div class="abs tn" style="left:1086.6px;">501</div><div class="abs tk" style="left:1255.5px;"></div><div class="abs tn" style="left:1258.3px;">551</div><div class="abs tn" style="left:1386px;">600</div><div class="abs" style="left:961.6px;top:2px;width:3.2px;height:22px;background:#5c6692;"></div><div class="abs" style="left:0;top:26.9px;width:1381.2px;height:13.7px;background:#3f4868;"></div><div class="abs" style="left:1383px;top:26.9px;width:11px;height:13.7px;background:#5c5c5c;border:1px solid #777;box-sizing:border-box;"></div><div class="abs" style="left:0;top:42.9px;width:1394px;height:1.5px;background:#4c4c4e;"></div><div class="abs" style="left:-2px;top:47px;width:96.4px;height:62.6px;background:#000;border:1px solid #5a5a5a;"></div><div class="abs" style="left:-1.6px;top:55px;height:56px;line-height:56px;font-size:42px;color:#8aaaf0;">5</div><div class="abs btn" style="left:99.7px;"><svg width="63" height="63" viewBox="0 0 63 63"><rect x="21.6" y="24" width="2.8" height="16.4" fill="#a9b0cc"/><path d="M33 24 V40.4 L24.6 32.2 Z M41.4 24 V40.4 L33 32.2 Z" fill="#a9b0cc"/></svg></div><div class="abs btn" style="left:167.5px;"><svg width="63" height="63" viewBox="0 0 63 63"><rect x="26" y="24" width="3.6" height="16.4" fill="#a9b0cc"/><rect x="33.4" y="24" width="3.6" height="16.4" fill="#a9b0cc"/></svg></div><div class="abs btn" style="left:235.6px;"><svg width="63" height="63" viewBox="0 0 63 63"><path d="M33.4 24 V40.4 L25 32.2 Z" fill="#a9b0cc"/></svg></div><div class="abs btn" style="left:303.8px;background:#b1875e;box-shadow:inset 0 0 0 0.7px #3c3c40;"><svg width="63" height="63" viewBox="0 0 63 63"><path d="M27.6 24 V40.4 L36.4 32.2 Z" fill="#3a100c"/></svg></div><div class="abs btn" style="left:371.9px;"><div style="text-align:center;line-height:58px;font-size:29px;color:#b4b8cc;">-</div></div><div class="abs btn" style="left:439.9px;"><div style="text-align:center;line-height:62px;font-size:26px;color:#b4b8cc;">+</div></div><div class="abs" style="left:531.8px;top:49px;height:28px;line-height:28px;font-size:19.8px;color:#aab0c6;white-space:nowrap;">Range Limit</div><div class="abs" style="left:510.3px;top:82px;width:86.1px;height:29.6px;background:#58585c;"></div><div class="abs" style="left:511.9px;top:83.9px;width:83.1px;height:26.2px;background:#b1875e;color:#471410;font-size:19.8px;line-height:28.8px;text-align:center;">Loop</div><div class="abs" style="left:598px;top:82px;width:73.4px;height:29.6px;background:#58585c;"></div><div class="abs" style="left:599.5px;top:83.6px;width:70.4px;height:26.5px;background:#38383c;color:#aab0c6;font-size:19.8px;line-height:30.2px;text-align:center;text-indent:2.4px;">Once</div></div></div>
</body></html>
